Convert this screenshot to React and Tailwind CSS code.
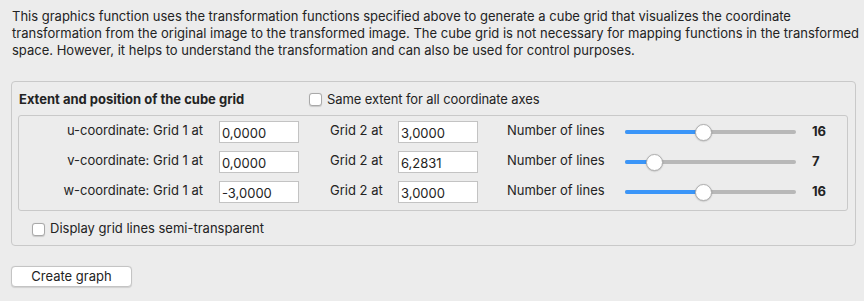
import React from 'react';

const rows = [
    { axis: 'u', grid1: '0,0000', grid2: '3,0000', thumb: 78, lines: '16' },
    { axis: 'v', grid1: '0,0000', grid2: '6,2831', thumb: 29, lines: '7' },
    { axis: 'w', grid1: '-3,0000', grid2: '3,0000', thumb: 78, lines: '16' },
];

function Checkbox() {
    return <span className="inline-block w-[13px] h-[13px] rounded-[3px] border border-[#a9a9a9] bg-white shadow-[0_0.5px_1px_rgba(0,0,0,0.15)]" />;
}

function Slider({ thumb }) {
    return (
        <div className="relative w-[171px] h-[17px] flex items-center">
            <div className="w-full h-[4px] rounded-full bg-[#b8b8b8]" />
            <div className="absolute left-0 h-[4px] rounded-full bg-[#3a95f8]" style={{ width: thumb }} />
            <div
                className="absolute top-0 w-[17px] h-[17px] rounded-full bg-white border border-[#b0b0b0] shadow-[0_0.5px_1.5px_rgba(0,0,0,0.25)]"
                style={{ left: thumb - 8 }}
            />
        </div>
    );
}

function Field({ value }) {
    return (
        <div className="w-[80px] h-[22px] bg-white border border-[#c3c3c3] pl-[2px] pt-[3px] leading-[17px]">
            {value}
        </div>
    );
}

export default function App() {
    return (
        <div className="w-[864px] h-[301px] bg-[#ececec] text-[13px] text-[#232323] font-['Inter',sans-serif] overflow-hidden">
            <p className="pl-[12px] pt-[8px] leading-[17px] whitespace-nowrap">
                This graphics function uses the transformation functions specified above to generate a cube grid that visualizes the coordinate
                <br />
                transformation from the original image to the transformed image. The cube grid is not necessary for mapping functions in the transformed
                <br />
                space. However, it helps to understand the transformation and can also be used for control purposes.
            </p>

            <div className="ml-[11px] mt-[22px] w-[845px] h-[165px] border border-[#c9c9c9] rounded-[4px] pl-[6px] pr-[7px]">
                <div className="h-[33px] flex items-center pt-[2px]">
                    <span className="ml-[1px] w-[290px] font-bold">Extent and position of the cube grid</span>
                    <Checkbox />
                    <span className="ml-[5px] tracking-[-0.1px]">Same extent for all coordinate axes</span>
                </div>

                <div className="h-[96px] border border-[#c9c9c9] rounded-[3px] pt-[5px] flex flex-col gap-[8px]">
                    {rows.map((r) => (
                        <div key={r.axis} className="flex items-center h-[22px]">
                            <span className="w-[184px] text-right -mt-[3px]">{r.axis}-coordinate: Grid 1 at</span>
                            <div className="ml-[16px]"><Field value={r.grid1} /></div>
                            <span className="ml-[31px] w-[68px] -mt-[3px]">Grid 2 at</span>
                            <Field value={r.grid2} />
                            <span className="ml-[29px] w-[118px] -mt-[3px]">Number of lines</span>
                            <Slider thumb={r.thumb} />
                            <span className="ml-[16px] font-bold">{r.lines}</span>
                        </div>
                    ))}
                </div>

                <div className="h-[36px] flex items-center pl-[14px]">
                    <Checkbox />
                    <span className="ml-[5px]">Display grid lines semi-transparent</span>
                </div>
            </div>

            <button className="ml-[11px] mt-[20px] w-[121px] h-[21px] bg-white border border-[#c4c4c4] rounded-[4px] shadow-[0_0.5px_1px_rgba(0,0,0,0.12)] leading-[19px]">
                Create graph
            </button>
        </div>
    );
}
